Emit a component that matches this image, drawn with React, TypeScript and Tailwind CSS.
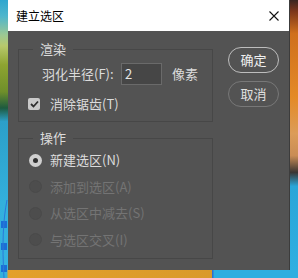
import React from 'react';

const font = "font-['Noto_Sans_CJK_SC','Microsoft_YaHei',sans-serif]";

const Radio: React.FC<{ checked?: boolean; disabled?: boolean; label: string }> = ({ checked, disabled, label }) => (
  <div className="flex items-center h-[16px] pl-[10px]">
    {disabled ? (
      <span className="w-[13px] h-[13px] rounded-full bg-[#4d4d4d] border border-[#4a4a4a]" />
    ) : (
      <span className="w-[13px] h-[13px] rounded-full bg-[#cfcfcf] flex items-center justify-center">
        <span className="w-[5px] h-[5px] rounded-full bg-[#303030]" />
      </span>
    )}
    <span className={`ml-[8px] text-[13px] leading-[16px] ${disabled ? 'text-[#747474]' : 'text-[#dcdcdc]'}`}>
      {label}
    </span>
  </div>
);

export default function App() {
  return (
    <div className={`relative w-[298px] h-[278px] overflow-hidden bg-[#e3a12f] ${font}`}>
      {/* backdrop: the canvas behind the dialog */}
      <div className="absolute left-0 top-0 w-[8px] h-[270px] bg-[linear-gradient(to_bottom,#2fa6cf_0%,#4fb6cc_6%,#9cc893_13%,#b7c86c_17%,#8ea431_24%,#6f8f2a_34%,#1d5a3f_40%,#2c9fc9_45%,#33b0dc_75%,#36b3e0_100%)]" />
      <div className="absolute right-0 top-0 w-[8px] h-[278px] bg-[linear-gradient(to_bottom,#3a2420_0%,#7c351b_4%,#cf6f1e_12%,#e48a26_35%,#dc9c58_48%,#c98c55_56%,#3a3533_62%,#2aa5d8_67%,#2fb0e2_100%)]" />
      <div className="absolute left-0 bottom-0 w-[298px] h-[8px] bg-[linear-gradient(to_right,#36b0dc_0px,#36b0dc_7px,#e3a02c_8px,#d99a2c_212px,#2f6fd0_212px,#2f6fd0_213px,#2eaee0_214px)]" />
      {[221, 243, 265].map((y) => (
        <div key={y} className="absolute left-[1px] w-[6px] h-[7px] bg-[#1b6fd6]" style={{ top: y }} />
      ))}
      <svg className="absolute left-0 top-[200px]" width="8" height="78" viewBox="0 0 8 78">
        <path d="M7 0 C3 20 2 45 4 78" stroke="#2a7ad8" strokeWidth="1" fill="none" />
      </svg>

      {/* dialog */}
      <div className="relative ml-[8px] w-[282px] h-[270px] flex flex-col bg-[#535353] border-r border-[#3c3c3c]">
        <div className="h-[31px] bg-white flex items-center justify-between pl-[8px] pr-[10px]">
          <span className="text-[12px] leading-[16px] text-black">建立选区</span>
          <svg width="10" height="10" viewBox="0 0 10 10">
            <path d="M0.5 0.5 L9.5 9.5 M9.5 0.5 L0.5 9.5" stroke="#111" strokeWidth="1.1" />
          </svg>
        </div>

        <div className="flex pl-[10px]">
          <div className="w-[195px] flex flex-col">
            {/* 渲染 */}
            <div className="relative mt-[18px] h-[73px] border border-[#474747] pt-[13px]">
              <span className="absolute -top-[9px] left-[14px] px-[7px] bg-[#535353] text-[13px] leading-[16px] text-[#dcdcdc]">
                渲染
              </span>
              <div className="flex items-center h-[22px] pl-[23px]">
                <span className="w-[79px] text-[13px] leading-[16px] text-[#dcdcdc]">羽化半径(F):</span>
                <div className="w-[41px] h-[22px] bg-[#464646] border border-[#6a6a6a] flex items-center pl-[3px] text-[13px] text-[#e6e6e6]">
                  2
                </div>
                <span className="ml-[10px] text-[13px] leading-[16px] text-[#dcdcdc]">像素</span>
              </div>
              <div className="flex items-center h-[16px] mt-[11px] pl-[9px]">
                <span className="w-[12px] h-[12px] rounded-[2px] bg-[#c9c9c9] flex items-center justify-center">
                  <svg width="9" height="8" viewBox="0 0 9 8">
                    <path d="M1 4 L3.5 6.5 L8 1.5" stroke="#2e2e2e" strokeWidth="1.8" fill="none" />
                  </svg>
                </span>
                <span className="ml-[10px] text-[13px] leading-[16px] text-[#dcdcdc]">消除锯齿(T)</span>
              </div>
            </div>

            {/* 操作 */}
            <div className="relative mt-[16px] h-[121px] border border-[#474747] pt-[13px] flex flex-col gap-[10.5px]">
              <span className="absolute -top-[9px] left-[14px] px-[7px] bg-[#535353] text-[13px] leading-[16px] text-[#dcdcdc]">
                操作
              </span>
              <Radio checked label="新建选区(N)" />
              <Radio disabled label="添加到选区(A)" />
              <Radio disabled label="从选区中减去(S)" />
              <Radio disabled label="与选区交叉(I)" />
            </div>
          </div>

          <div className="ml-[15px] mt-[16px] flex flex-col gap-[8px]">
            <button className="w-[51px] h-[26px] rounded-full border-[1.5px] border-[#bdbdbd] text-[13px] text-[#f0f0f0] flex items-center justify-center">
              确定
            </button>
            <button className="w-[51px] h-[26px] rounded-full border border-[#787878] text-[13px] text-[#e0e0e0] flex items-center justify-center">
              取消
            </button>
          </div>
        </div>
      </div>
    </div>
  );
}
